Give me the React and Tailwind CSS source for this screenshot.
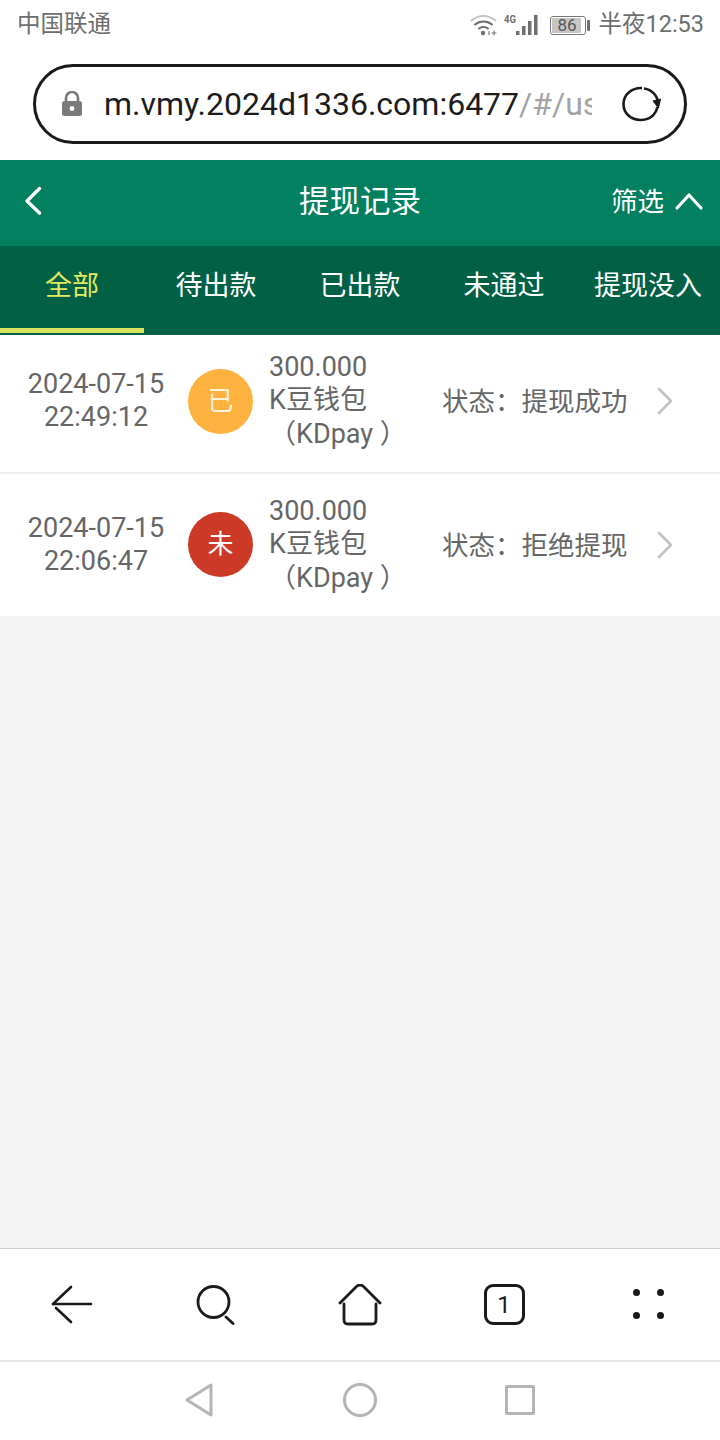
const tabs = ["全部", "待出款", "已出款", "未通过", "提现没入"];

const records = [
  { date: "2024-07-15", time: "22:49:12", badge: "已", badgeClass: "mt-[1px] bg-[#fdb13f] text-[#fdf3dc]", status: "提现成功", rowClass: "pt-[16px] pb-[21px]" },
  { date: "2024-07-15", time: "22:06:47", badge: "未", badgeClass: "bg-[#cc3a27] text-white", status: "拒绝提现", rowClass: "pt-[21px] pb-[21px]" },
];

function StatusBar() {
  return (
    <div className="h-[50px] flex items-center pl-[17px] pr-[16px] text-[#6e6e6e] text-[23.5px] bg-white">
      <span>中国联通</span>
      <div className="ml-auto flex items-center">
        {/* wifi */}
        <svg width="27" height="22" viewBox="0 0 27 22" fill="none" strokeLinecap="round">
          <path d="M1.5 6.5C8.5 0.5 18 0.5 25.5 6.5" stroke="#c4c4c4" strokeWidth="2" />
          <path d="M5 10.5C10 6.5 17 6.5 22 10.5" stroke="#6e6e6e" strokeWidth="2" />
          <path d="M9 14.5C11.5 12.5 15.5 12.5 18 14.5" stroke="#6e6e6e" strokeWidth="2" />
          <circle cx="13" cy="19" r="2.2" fill="#6e6e6e" />
          <path d="M19 17.5V20.5M24 17V21M22 19H26" stroke="#777" strokeWidth="1.2" />
        </svg>
        {/* 4G + signal */}
        <svg className="ml-[7px]" width="35" height="22" viewBox="0 0 35 22" fill="#6e6e6e">
          <text x="0" y="9" fontSize="11" fontWeight="700" textLength="12" lengthAdjust="spacingAndGlyphs" fontFamily="Roboto, sans-serif">4G</text>
          <rect x="12" y="17" width="3.500" height="4" />
          <rect x="18" y="12" width="3.500" height="9" />
          <rect x="24" y="7" width="3.500" height="14" />
          <rect x="30" y="1" width="3.500" height="20" />
        </svg>
        {/* battery */}
        <div className="ml-[11px] flex items-center">
          <div className="w-[36px] h-[19px] rounded-[3px] border border-[#777] p-[1px] flex">
            <div className="w-[29px] h-full rounded-[1px] bg-[#c6c6c6] flex items-center justify-center text-[17px] leading-none text-[#555]">86</div>
          </div>
          <div className="ml-[1px] w-[3px] h-[11px] bg-[#6e6e6e] rounded-[1px]" />
        </div>
        <span className="ml-[8px] leading-none">半夜12:53</span>
      </div>
    </div>
  );
}

function UrlBar() {
  return (
    <div className="h-[110px] flex items-center px-[33px] bg-white">
      <div className="w-[654px] h-[80px] -mt-[2px] rounded-[40px] border-[3px] border-[#1a1a1a] flex items-center pl-[25px]">
        <svg width="22" height="26" viewBox="0 0 22 26" fill="#7a7a7a">
          <path d="M5 11V7a6 6 0 0 1 12 0v4" fill="none" stroke="#7a7a7a" strokeWidth="2.6" />
          <rect x="1" y="10" width="20" height="15" rx="2.5" />
          <circle cx="11" cy="17.5" r="2.4" fill="#fff" />
        </svg>
        <div className="ml-[21px] w-[488px] overflow-hidden whitespace-nowrap text-[32px] text-[#1c1c1c]">
          m.vmy.2024d1336.com:6477<span className="text-[#a3a3a3]">/#/us</span>
        </div>
        <svg className="ml-[29px]" width="40" height="36" viewBox="0 0 40 36" fill="none" stroke="#1a1a1a" strokeWidth="2.6">
          <path d="M21 2C11 1.5 2.5 8.500 2.500 18C2.500 27.500 10 34 19.500 34C28.500 34 34 30 36.500 21" />
          <path d="M23 2.500C31 3.500 37 10 37 18" />
          <path d="M32 15L37.500 22L39.500 13Z" fill="#1a1a1a" strokeWidth="1" />
        </svg>
      </div>
    </div>
  );
}

function Header() {
  return (
    <div className="h-[86px] bg-[#02805f] grid grid-cols-3 items-center text-white pb-[4px]">
      <div className="pl-[24px] flex">
        <svg width="20" height="30" viewBox="0 0 20 30" fill="none" stroke="#fff" strokeWidth="3.4" strokeLinecap="round" strokeLinejoin="round">
          <path d="M15.500 2.500L3 15L15.500 27" />
        </svg>
      </div>
      <div className="mt-[2px] text-[30.500px] leading-none text-center">提现记录</div>
      <div className="flex items-center justify-end pr-[17px]">
        <span className="mt-[3px] text-[26.500px] leading-none">筛选</span>
        <svg className="ml-[11px]" width="28" height="18" viewBox="0 0 28 18" fill="none" stroke="#fff" strokeWidth="3.2" strokeLinecap="round" strokeLinejoin="round">
          <path d="M2 16L14 3L26 16" />
        </svg>
      </div>
    </div>
  );
}

function Tabs() {
  return (
    <div className="h-[89px] bg-[#026045] grid grid-cols-5 pb-[2px]">
      {tabs.map((tab, idx) => (
        <div
          key={tab}
          className={
            idx === 0
              ? "flex items-center justify-center pb-[2px] text-[27px] text-[#e3ea62] border-b-[5px] border-[#d9e45f]"
              : "flex items-center justify-center pb-[2px] text-[27px] text-white border-b-[5px] border-transparent"
          }
        >
          {tab}
        </div>
      ))}
    </div>
  );
}

function RecordRow({ record }) {
  return (
    <div className={"flex items-center bg-white text-[#666] text-[27px] " + record.rowClass}>
      <div className="w-[188px] pl-[4px] text-center leading-[33px] shrink-0">
        <div>{record.date}</div>
        <div>{record.time}</div>
      </div>
      <div className={"w-[65px] h-[65px] rounded-full flex items-center justify-center text-[26px] shrink-0 " + record.badgeClass}>
        {record.badge}
      </div>
      <div className="ml-[16px] w-[173px] shrink-0 leading-[33.333px]">
        <div>300.000</div>
        <div className="w-[140px]">K豆钱包（KDpay ）</div>
      </div>
      <div className="w-[215px] mt-[2px] shrink-0 text-[26.500px] leading-[33px] whitespace-nowrap">状态：{record.status}</div>
      <svg width="16" height="28" viewBox="0 0 16 28" fill="none" stroke="#c2c2c2" strokeWidth="2.600" strokeLinecap="round" strokeLinejoin="round">
        <path d="M2 2L14 14L2 26" />
      </svg>
    </div>
  );
}

function BrowserBar() {
  return (
    <div className="h-[112px] bg-white border-t border-[#cfcfcf] grid grid-cols-5 items-center">
      <div className="flex justify-center">
        <svg width="44" height="40" viewBox="0 0 44 40" fill="none" stroke="#1a1a1a" strokeWidth="2.600" strokeLinecap="round">
          <path d="M3 19H41" />
          <path d="M21 2L3 19" />
          <path d="M6 23L21 37" />
        </svg>
      </div>
      <div className="flex justify-center">
        <svg width="40" height="40" viewBox="0 0 40 40" fill="none" stroke="#1a1a1a" strokeWidth="2.800" strokeLinecap="round">
          <circle cx="17.500" cy="17" r="15.500" />
          <path d="M30 32L37 38.500" />
        </svg>
      </div>
      <div className="flex justify-center">
        <svg width="44" height="42" viewBox="0 0 44 42" fill="none" stroke="#1a1a1a" strokeWidth="2.800" strokeLinecap="round" strokeLinejoin="round">
          <path d="M2 19L18.500 2.500C20.500 0.900 23.500 0.900 25.500 2.500L42 19" />
          <path d="M6 20V36C6 38.500 7.500 40 10 40H34C36.500 40 38 38.500 38 36V20" />
        </svg>
      </div>
      <div className="flex justify-center">
        <div className="w-[41px] h-[41px] rounded-[9px] border-[3px] border-[#1a1a1a] flex items-center justify-center text-[24px] leading-none text-[#1a1a1a]">1</div>
      </div>
      <div className="flex justify-center">
        <div className="grid grid-cols-2 gap-x-[17px] gap-y-[16px] -mt-[2px]">
          <span className="w-[7px] h-[7px] rounded-full bg-[#1a1a1a]" />
          <span className="w-[7px] h-[7px] rounded-full bg-[#1a1a1a]" />
          <span className="w-[7px] h-[7px] rounded-full bg-[#1a1a1a]" />
          <span className="w-[7px] h-[7px] rounded-full bg-[#1a1a1a]" />
        </div>
      </div>
    </div>
  );
}

function NavBar() {
  return (
    <div className="h-[80px] bg-white border-t-2 border-[#e6e6e6] flex items-center justify-center pb-[2px] pr-[2px]">
      <svg width="30" height="36" viewBox="0 0 30 36" fill="none" stroke="#b5b5b5" strokeWidth="3" strokeLinejoin="round">
        <path d="M27 3V33L3 18Z" />
      </svg>
      <svg className="ml-[128px]" width="36" height="36" viewBox="0 0 36 36" fill="none" stroke="#b5b5b5" strokeWidth="3">
        <circle cx="18" cy="18" r="15.500" />
      </svg>
      <div className="ml-[127px] w-[30px] h-[30px] rounded-[2px] border-[3px] border-[#b5b5b5]" />
    </div>
  );
}

export default function App() {
  return (
    <div className="w-[720px] h-[1440px] flex flex-col bg-[#f3f3f3] overflow-hidden font-['Roboto','Noto_Sans_CJK_SC',sans-serif]">
      <StatusBar />
      <UrlBar />
      <Header />
      <Tabs />
      <RecordRow record={records[0]} />
      <div className="h-[2px] bg-[#eeeeee]" />
      <RecordRow record={records[1]} />
      <div className="flex-1" />
      <BrowserBar />
      <NavBar />
    </div>
  );
}
